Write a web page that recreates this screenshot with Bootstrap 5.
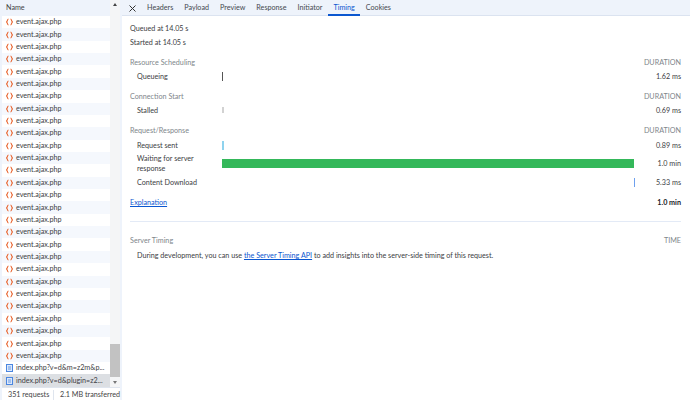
<!DOCTYPE html>
<html lang="en">
<head>
  <meta charset="UTF-8" />
  <title>Network Timing</title>
  <link href="https://cdn.jsdelivr.net/npm/bootstrap@5.3.2/dist/css/bootstrap.min.css" rel="stylesheet">
  <style>
    html, body { height: 400px; overflow: hidden; }
    body { font-family: Lato, "Noto Sans", sans-serif; font-size: 7.2px; line-height: 10px; color: #3c4043; background: #fff; }
    .shell { width: 690px; height: 400px; }
    .req-pane { width: 122px; border-left: 2px solid #eef3fb; border-right: 2px solid #eef3fb; }
    .req-head { height: 16px; background: #eef3fb; padding-left: 4px; color: #444; }
    .req-list { width: 108px; }
    .req-row { height: 12.37px; padding-left: 4px; gap: 3px; white-space: nowrap; }
    .req-row:nth-child(even) { background: #f5f8fd; }
    .req-row.picked { background: #dcdfe3; }
    .req-row svg { flex: none; }
    .scroll-rail { width: 10px; background: #f4f5f6; }
    .scroll-thumb { height: 33px; background: #c2c2c2; margin-bottom: 10px; }
    .arrow-up { top: 3px; left: 3px; border: 2.500px solid transparent; border-top: 0; border-bottom: 3px solid #444; }
    .arrow-down { bottom: 3px; left: 3px; border: 2.500px solid transparent; border-bottom: 0; border-top: 3px solid #777; }
    .req-foot { height: 13px; border-top: 1px solid #dfe5ee; padding: 2px 0 0 6px; background: #fff; color: #444; white-space: nowrap; }
    .foot-count { width: 45px; }
    .foot-size { border-left: 1px solid #dfe5ee; padding-left: 6px; }
    .tab-strip { height: 16px; background: #eef3fb; border-bottom: 1px solid #dbe3f0; padding-left: 7px; }
    .tab-close { width: 12.500px; height: 16px; }
    .tab-item { padding: 0 5.500px; height: 16px; line-height: 16px; color: #45494f; }
    .tab-item.on { color: #0b57d0; border-bottom: 2px solid #0b57d0; }
    .timing { padding: 5px 9px 0 8px; }
    .line-a { height: 14px; line-height: 15px; }
    .sect { height: 14px; margin-top: 6px; line-height: 15px; color: #80868b; }
    .sect-first { margin-top: 0; }
    .t-row { height: 14px; line-height: 15px; }
    .t-sent { margin-top: 1px; }
    .t-tall { height: 23px; }
    .t-name { width: 92px; padding-left: 7px; flex: none; }
    .t-tall .t-name { line-height: 9.500px; align-self: center; }
    .t-tall .t-val { line-height: 23px; }
    .t-bar { width: 413px; flex: none; height: 100%; }
    .t-val { flex: 1; text-align: right; }
    .seg { height: 9px; }
    .seg-q { width: 1px; background: #555; }
    .seg-s { width: 2px; height: 6px; background: #d2d2d2; }
    .seg-r { width: 2px; background: #8fd3ee; }
    .seg-w { width: 412px; background: #34b85a; }
    .seg-d { width: 1px; background: #6ea0ee; margin-left: 412px; }
    .blue-link { color: #0b57d0; }
    .t-sum { margin-top: 6px; }
    .t-sum strong { color: #202124; }
    .rule { border-top: 1px solid #e3eaf6; margin: 12px 0 11px; }
    .t-note { padding-left: 7px; margin-top: 1px; }
  </style>
</head>
<body>
  <div class="shell d-flex">
    <div class="req-pane d-flex flex-column flex-shrink-0">
      <div class="d-flex flex-grow-1 overflow-hidden">
        <div class="req-list flex-shrink-0">
          <div class="req-head d-flex align-items-center">Name</div>
          <div id="reqs"></div>
        </div>
        <div class="scroll-rail position-relative d-flex flex-column justify-content-end flex-grow-1">
          <span class="arrow-up position-absolute"></span>
          <div class="scroll-thumb"></div>
          <span class="arrow-down position-absolute"></span>
        </div>
      </div>
      <div class="req-foot d-flex align-items-center"><span class="foot-count">351 requests</span><span class="foot-size">2.1 MB transferred</span></div>
    </div>
    <div class="flex-grow-1 d-flex flex-column">
      <div class="tab-strip d-flex align-items-start">
        <span class="tab-close d-flex align-items-center">
          <svg width="7" height="7" viewBox="0 0 7 7"><path d="M.5.5l6 6M6.500.5l-6 6" stroke="#333" stroke-width="1"/></svg>
        </span>
        <span class="tab-item">Headers</span>
        <span class="tab-item">Payload</span>
        <span class="tab-item">Preview</span>
        <span class="tab-item">Response</span>
        <span class="tab-item">Initiator</span>
        <span class="tab-item on">Timing</span>
        <span class="tab-item">Cookies</span>
      </div>
      <div class="timing">
        <div class="line-a">Queued at 14.05 s</div>
        <div class="line-a">Started at 14.05 s</div>
        <div class="sect d-flex justify-content-between"><span>Resource Scheduling</span><span>DURATION</span></div>
        <div class="t-row d-flex"><div class="t-name">Queueing</div><div class="t-bar d-flex align-items-center"><div class="seg seg-q"></div></div><div class="t-val">1.62 ms</div></div>
        <div class="sect d-flex justify-content-between"><span>Connection Start</span><span>DURATION</span></div>
        <div class="t-row d-flex"><div class="t-name">Stalled</div><div class="t-bar d-flex align-items-center"><div class="seg seg-s"></div></div><div class="t-val">0.69 ms</div></div>
        <div class="sect d-flex justify-content-between"><span>Request/Response</span><span>DURATION</span></div>
        <div class="t-row t-sent d-flex"><div class="t-name">Request sent</div><div class="t-bar d-flex align-items-center"><div class="seg seg-r"></div></div><div class="t-val">0.89 ms</div></div>
        <div class="t-row t-tall d-flex"><div class="t-name">Waiting for server response</div><div class="t-bar d-flex align-items-center"><div class="seg seg-w"></div></div><div class="t-val">1.0 min</div></div>
        <div class="t-row d-flex"><div class="t-name">Content Download</div><div class="t-bar d-flex align-items-center"><div class="seg seg-d"></div></div><div class="t-val">5.33 ms</div></div>
        <div class="t-row t-sum d-flex justify-content-between"><a href="#" class="blue-link">Explanation</a><strong class="fw-bold">1.0 min</strong></div>
        <div class="rule"></div>
        <div class="sect sect-first d-flex justify-content-between"><span>Server Timing</span><span>TIME</span></div>
        <div class="t-row t-note">During development, you can use <a href="#" class="blue-link">the Server Timing API</a> to add insights into the server-side timing of this request.</div>
      </div>
    </div>
  </div>
  <script>
    var doc = '<svg width="7" height="8" viewBox="0 0 7 8"><rect x=".5" y=".5" width="6" height="7" fill="#dbe8fb" stroke="#4a86e0"/><path d="M2 3h3M2 5h3" stroke="#4a86e0" stroke-width=".8"/></svg>';
    var js = '<svg width="7" height="8" viewBox="0 0 7 8" fill="none" stroke="#e8622c" stroke-width="1.100"><path d="M2.500 1C1.200 1 1.700 3.500.5 4c1.200.5.700 3 2 3M4.500 1C5.800 1 5.300 3.500 6.500 4c-1.200.5-.7 3-2 3"/></svg>';
    var rows = '';
    for (var i = 0; i < 28; i++) rows += '<div class="req-row d-flex align-items-center">' + js + '<span>event.ajax.php</span></div>';
    rows += '<div class="req-row d-flex align-items-center">' + doc + '<span>index.php?v=d&amp;m=z2m&amp;p...</span></div>';
    rows += '<div class="req-row picked d-flex align-items-center">' + doc + '<span>index.php?v=d&amp;plugin=z2...</span></div>';
    document.getElementById('reqs').innerHTML = rows;
  </script>
  <script src="https://cdn.jsdelivr.net/npm/bootstrap@5.3.2/dist/js/bootstrap.bundle.min.js"></script>
</body>
</html>
